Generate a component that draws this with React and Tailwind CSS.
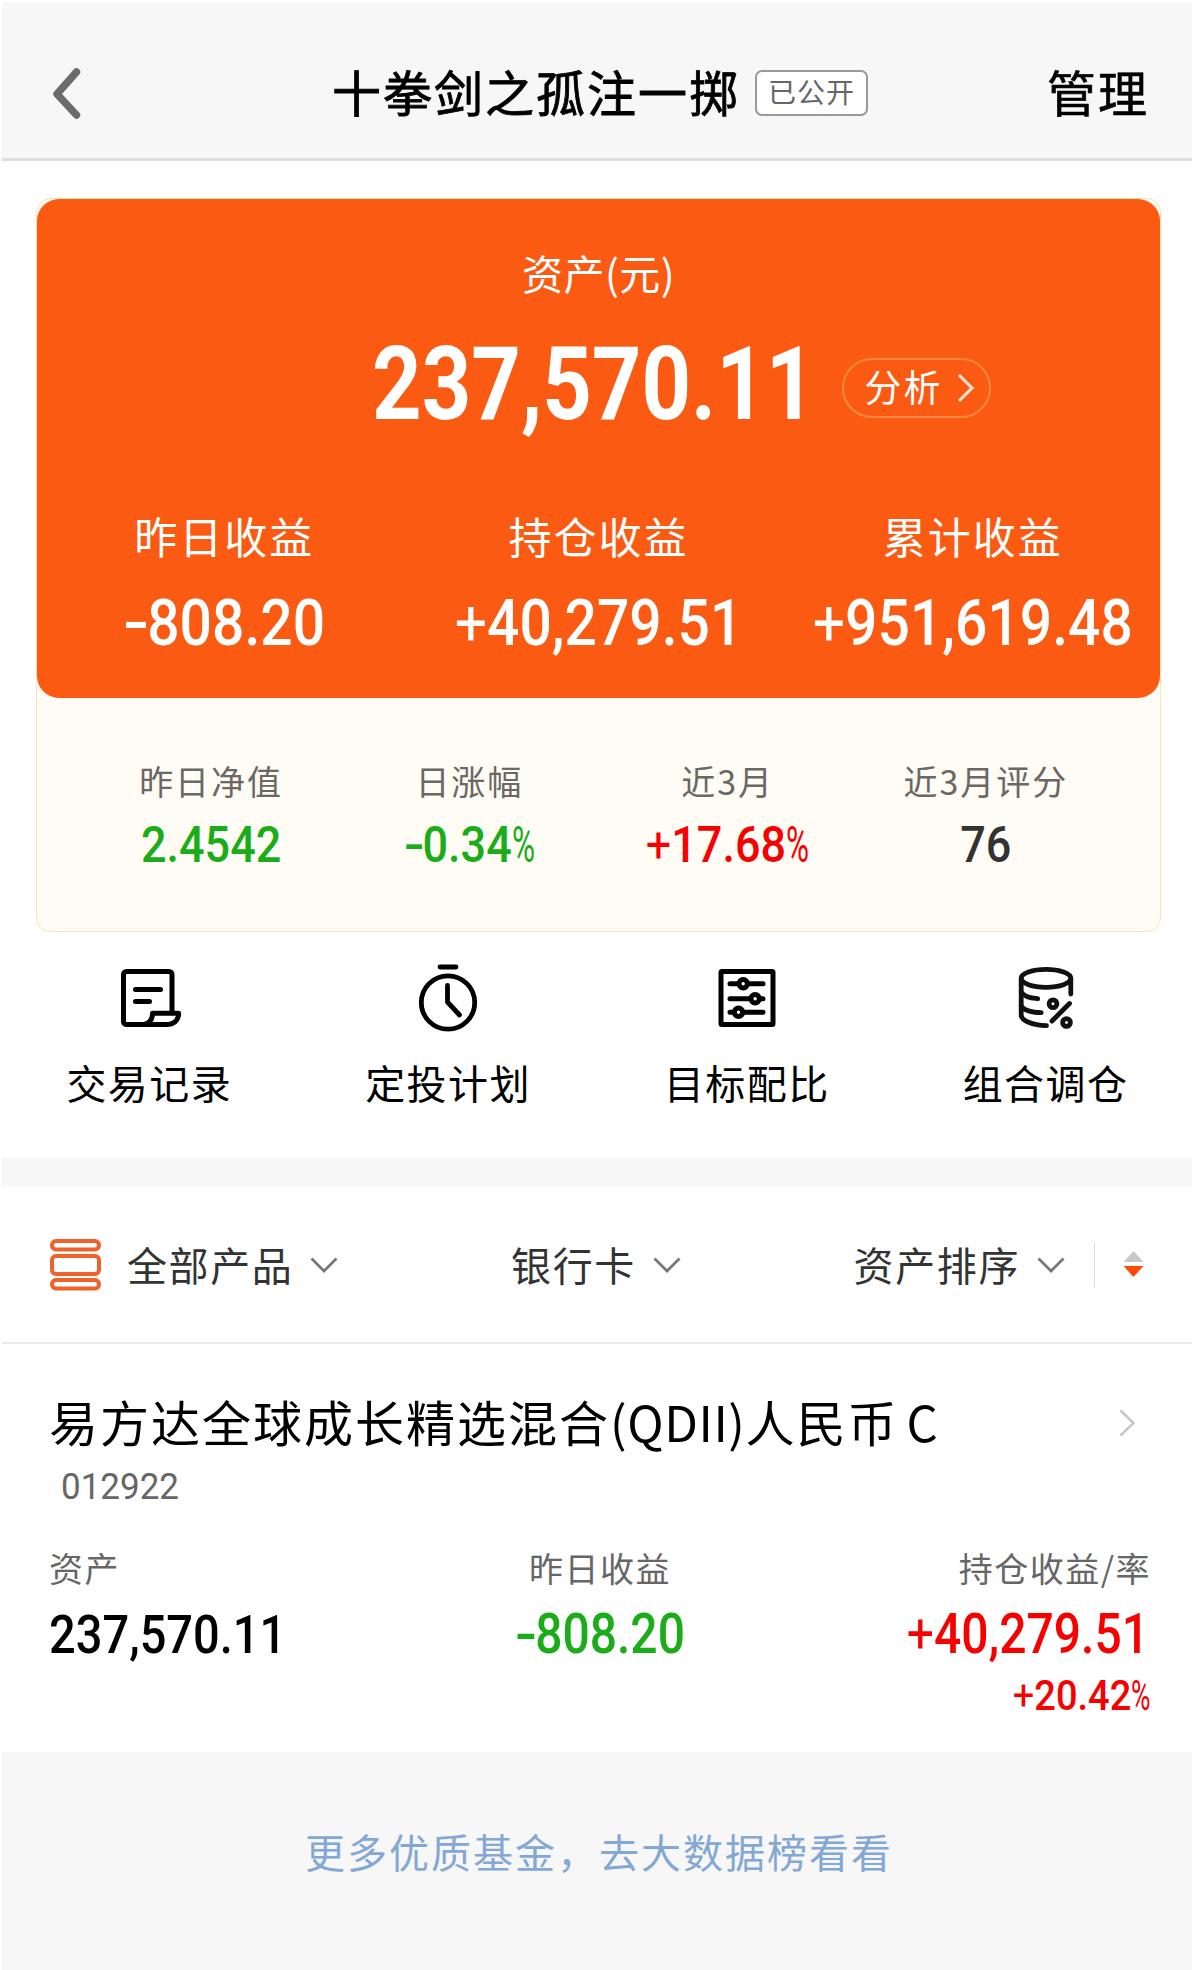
import React from "react";

const summary = [
  { label: "昨日收益", sign: "-", value: "808.20" },
  { label: "持仓收益", sign: "+", value: "40,279.51" },
  { label: "累计收益", sign: "+", value: "951,619.48" },
];

const stats = [
  { label: "昨日净值", value: "2.4542", color: "text-[#1aad19]" },
  { label: "日涨幅", sign: "-", value: "0.34", percent: true, color: "text-[#1aad19]" },
  { label: "近3月", sign: "+", value: "17.68", percent: true, color: "text-[#f70000]" },
  { label: "近3月评分", value: "76", color: "text-[#333333]" },
];

function RecordIcon() {
  return (
    <svg width="70" height="70" viewBox="0 0 70 70" fill="none" stroke="#000" strokeWidth="5" strokeLinecap="round" strokeLinejoin="round">
      <path d="M58 49V10.500a3 3 0 0 0-3-3H12.500a3 3 0 0 0-3 3v47a3 3 0 0 0 3 3H52c8 0 12.500-4 12.700-11.300H38.500c0 5.500-2.500 9.500-7.500 11" />
      <path d="M21.500 25.500h25M21.500 37.500h14" />
    </svg>
  );
}

function PlanIcon() {
  return (
    <svg width="70" height="70" viewBox="0 0 70 70" fill="none" stroke="#000" strokeWidth="4.800" strokeLinecap="round" strokeLinejoin="round">
      <circle cx="35" cy="38.500" r="26.700" />
      <path d="M27 3h16" />
      <path d="M34.500 21.500V38l12 13" />
    </svg>
  );
}

function TargetIcon() {
  return (
    <svg width="70" height="70" viewBox="0 0 70 70" fill="none" stroke="#000" strokeWidth="5" strokeLinecap="round" strokeLinejoin="round">
      <rect x="9" y="7.500" width="52" height="53" rx="1" />
      <path d="M18 19.700h33M18 34.700h33M18 48.300h33" />
      <circle cx="31.200" cy="19.700" r="4.200" fill="#fff" />
      <circle cx="43.100" cy="34.700" r="4.200" fill="#fff" />
      <circle cx="26.500" cy="48.300" r="4.200" fill="#fff" />
    </svg>
  );
}

function AdjustIcon() {
  return (
    <svg width="70" height="70" viewBox="1 0 70 70" fill="none" stroke="#111" strokeWidth="4.800" strokeLinecap="round" strokeLinejoin="round">
      <ellipse cx="36" cy="14.300" rx="24.800" ry="9" />
      <path d="M11.200 14.300V51c0 5.500 11 10.300 25.300 10.700M60.800 14.300V30" />
      <path d="M11.200 28c2 3.500 8 6 16.500 6.700M11.200 42c2 3.500 9 6.300 20 6.700" />
      <path d="M42 57l17.500-17.500" />
      <circle cx="43" cy="39.700" r="3.900" />
      <circle cx="56.500" cy="58.500" r="3.900" />
    </svg>
  );
}

const actions = [
  { label: "交易记录", icon: <RecordIcon /> },
  { label: "定投计划", icon: <PlanIcon /> },
  { label: "目标配比", icon: <TargetIcon /> },
  { label: "组合调仓", icon: <AdjustIcon /> },
];

function Arrow() {
  return (
    <svg width="28" height="16" viewBox="0 0 28 16" fill="none" stroke="#777" strokeWidth="2.800">
      <path d="M1.500 1.500L14 14L26.500 1.500" />
    </svg>
  );
}

function FilterItem({ text }) {
  return (
    <div className="flex items-center gap-[17px]">
      <span className="text-[40px] leading-[50px] tracking-[1.600px] text-[#333333] -mt-[2px]">{text}</span>
      <Arrow />
    </div>
  );
}

// 数字统一用 Roboto，纵向略拉高
function Num({ className, sign, percent, children }) {
  return (
    <span className={"inline-block whitespace-nowrap font-[Roboto,sans-serif] " + className}>
      {sign === "-" && <span className="inline-block w-[0.420em] text-left origin-left scale-x-[1.350]">-</span>}
      {sign === "+" && <span className="font-normal">+</span>}
      {children}
      {percent && <span className="inline-block font-normal w-[0.520em] text-left origin-left scale-x-[0.700]">%</span>}
    </span>
  );
}

function Header() {
  return (
    <header className="h-[159px] bg-[#f7f7f7] border-b-[3px] border-[#dedede] pl-[50px] pr-[43px] pt-[25px] flex items-center justify-between">
      <button className="w-[101px]">
        <svg width="30" height="52" viewBox="0 0 30 52" fill="none" stroke="#6b6b6b" strokeWidth="7.500" strokeLinecap="round" strokeLinejoin="round">
          <path d="M24.500 5L5 27L24.500 48" />
        </svg>
      </button>
      <div className="flex items-center">
        <h1 className="text-[49px] leading-[60px] tracking-[2px] text-black [-webkit-text-stroke:0.8px_#000] -mt-[4px]">十拳剑之孤注一掷</h1>
        <span className="ml-[15px] h-[46px] w-[113px] border-2 border-[#999] rounded-[7px] bg-white text-[28px] leading-[39px] tracking-[1px] text-[#666] text-center">
          已公开
        </span>
      </div>
      <button className="text-[49px] leading-[60px] tracking-[2px] text-black [-webkit-text-stroke:0.6px_#000] -mt-[4px]">管理</button>
    </header>
  );
}

function AssetCard() {
  return (
    <section className="ml-[34px] mr-[31px] mt-[37px] h-[734px] border-[1.500px] border-[#f8e3b4] rounded-[14px] bg-[#fffcf6]">
      <div className="h-[499px] rounded-[22px] bg-[#fb5a12] text-white pt-[43px]">
        <div className="text-[41px] leading-[60px] tracking-[0.500px] text-center">资产(元)</div>
        <div className="mt-[38px] h-[90px] pl-[335px] flex items-center">
          <Num className="text-[86.500px] leading-[90px] font-bold scale-y-[1.170]">237,570.11</Num>
          <button className="ml-[27px] mt-[5px] w-[149px] h-[60px] rounded-full border-2 border-[#ff8a3d] flex items-center pl-[20px]">
            <span className="text-[37px] leading-[50px] tracking-[2px] -mt-[4px]">分析</span>
            <svg className="ml-[15px]" width="18" height="30" viewBox="0 0 18 30" fill="none" stroke="#ffe3d3" strokeWidth="3">
              <path d="M2 2L15 15L2 28" />
            </svg>
          </button>
        </div>
        <div className="mt-[77px] grid grid-cols-3 text-center">
          {summary.map((item) => (
            <div key={item.label}>
              <div className="text-[43px] leading-[56px] tracking-[2px]">{item.label}</div>
              <Num sign={item.sign} className="mt-[30px] text-[57px] leading-[60px] font-medium scale-y-[1.150]">
                {item.value}
              </Num>
            </div>
          ))}
        </div>
      </div>
      <div className="px-[45px] pt-[61px] grid grid-cols-4 text-center">
        {stats.map((item) => (
          <div key={item.label}>
            <div className="text-[34px] leading-[44px] tracking-[2px] text-[#6b6763]">{item.label}</div>
            <Num sign={item.sign} percent={item.percent} className={"mt-[17px] text-[45px] leading-[50px] font-medium scale-y-[1.120] " + item.color}>
              {item.value}
            </Num>
          </div>
        ))}
      </div>
    </section>
  );
}

function Actions() {
  return (
    <nav className="h-[226px] -ml-[2px] -mr-[3px] pt-[32px] grid grid-cols-4">
      {actions.map((item) => (
        <div key={item.label} className="flex flex-col items-center">
          {item.icon}
          <span className="mt-[23px] text-[40px] leading-[50px] tracking-[1.500px] text-black">{item.label}</span>
        </div>
      ))}
    </nav>
  );
}

function FilterBar() {
  return (
    <div className="h-[157px] border-b-2 border-[#ebebeb] pl-[48px] pr-[48px] flex items-center justify-between">
      <div className="flex items-center gap-[26px]">
        <svg width="51" height="52" viewBox="0 0 51 52" fill="none" stroke="#f1622b" strokeWidth="4">
          <rect x="2" y="2" width="47" height="8.500" rx="4" />
          <rect x="2" y="17" width="47" height="18" rx="4" />
          <rect x="2" y="41" width="47" height="8.500" rx="4" />
        </svg>
        <FilterItem text="全部产品" />
      </div>
      <FilterItem text="银行卡" />
      <div className="flex items-center">
        <FilterItem text="资产排序" />
        <span className="ml-[29px] w-px h-[45px] bg-[#dcdcdc]" />
        <svg className="ml-[28px]" width="21" height="27" viewBox="0 0 21 27">
          <path d="M10.500 0L20.500 11H0.500z" fill="#c9c9c9" />
          <path d="M0.500 15H20.500L10.500 26z" fill="#ff4a08" />
        </svg>
      </div>
    </div>
  );
}

function FundItem() {
  return (
    <section className="h-[408px] pl-[47px] pr-[41px] pt-[47px]">
      <div className="flex items-center justify-between pr-[15px]">
        <h2 className="text-[49px] leading-[60px] tracking-[2px] text-black whitespace-nowrap [word-spacing:-5px]">
          易方达全球成长精选混合<span className="tracking-[0.600px]">(QDII)</span>人民币 C
        </h2>
        <svg className="mt-[4px]" width="17" height="28" viewBox="0 0 17 28" fill="none" stroke="#c8c8c8" strokeWidth="2.500">
          <path d="M1.500 1.500L14.500 14L1.500 26.500" />
        </svg>
      </div>
      <div className="mt-[16px] h-[40px] pl-[12px]">
        <Num className="text-[35px] leading-[40px] text-[#666] scale-y-[1.080]">012922</Num>
      </div>
      <div className="mt-[41px] grid grid-cols-3 text-[34px] leading-[40px] text-[#666]">
        <div>
          <div className="tracking-[1.500px]">资产</div>
          <Num className="mt-[21px] text-[47px] leading-[50px] font-medium text-black scale-y-[1.160]">237,570.11</Num>
        </div>
        <div className="text-center">
          <div className="tracking-[1.500px]">昨日收益</div>
          <Num sign="-" className="mt-[22px] text-[48px] leading-[50px] font-medium text-[#1aad19] scale-y-[1.140]">808.20</Num>
        </div>
        <div className="text-right">
          <div className="tracking-[1.500px]">持仓收益/率</div>
          <Num sign="+" className="mt-[22px] mr-[2px] text-[48px] leading-[50px] font-medium text-[#f70000] scale-y-[1.140]">40,279.51</Num>
          <div className="mt-[15px] h-[40px]">
            <Num sign="+" percent className="text-[38px] leading-[40px] font-medium text-[#f70000] scale-y-[1.100]">20.42</Num>
          </div>
        </div>
      </div>
    </section>
  );
}

export default function App() {
  return (
    <div className="h-[1970px] w-[1194px] pt-[2px] px-[2px] bg-white overflow-hidden flex flex-col font-['Noto_Sans_CJK_SC',sans-serif]">
      <Header />
      <AssetCard />
      <Actions />
      <div className="h-[29px] bg-[#f7f7f7]" />
      <FilterBar />
      <FundItem />
      <footer className="flex-1 bg-[#f7f7f7] pt-[71px] pl-[4px] text-center">
        <a className="text-[40px] leading-[56px] tracking-[2px] text-[#83a8d6]">更多优质基金，去大数据榜看看</a>
      </footer>
    </div>
  );
}
